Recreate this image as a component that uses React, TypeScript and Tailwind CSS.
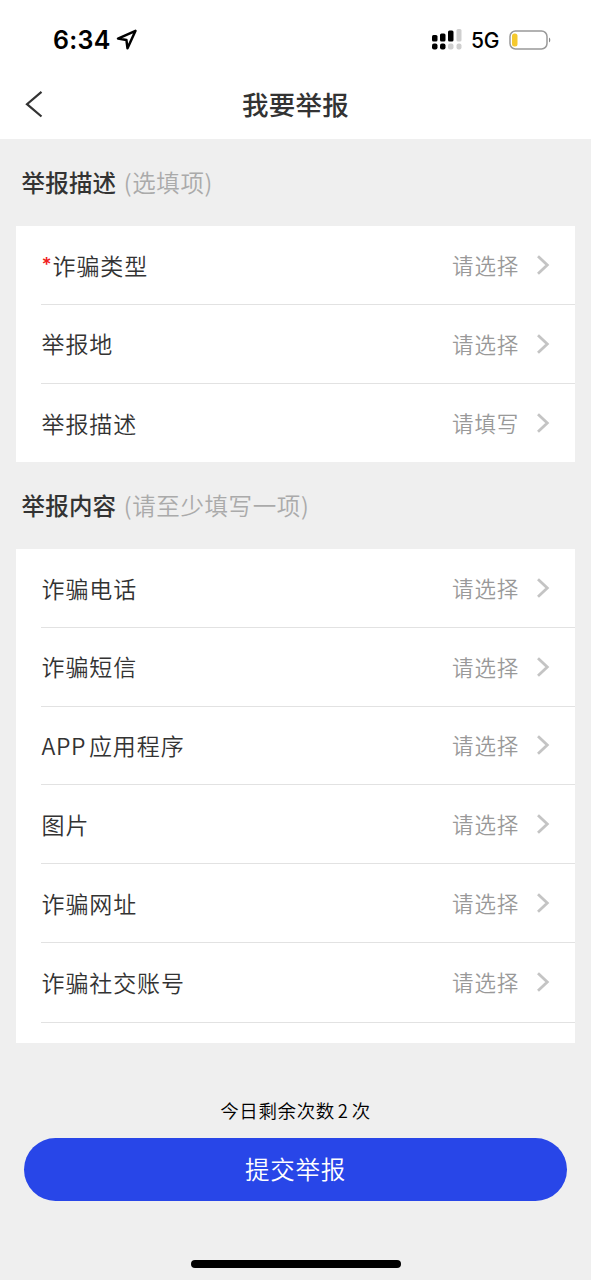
import type { ReactNode } from "react";

type Item = { id: string; label: ReactNode; value: string; required?: boolean };

const descItems: Item[] = [
  { id: "type", label: "诈骗类型", value: "请选择", required: true },
  { id: "place", label: "举报地", value: "请选择" },
  { id: "desc", label: "举报描述", value: "请填写" },
];

const contentItems: Item[] = [
  { id: "phone", label: "诈骗电话", value: "请选择" },
  { id: "sms", label: "诈骗短信", value: "请选择" },
  {
    id: "app",
    label: (
      <>
        <span className="mr-[3px] tracking-[0.6px]">APP</span>应用程序
      </>
    ),
    value: "请选择",
  },
  { id: "image", label: "图片", value: "请选择" },
  { id: "url", label: "诈骗网址", value: "请选择" },
  { id: "social", label: "诈骗社交账号", value: "请选择" },
];

function StatusBar() {
  return (
    <div className="flex h-[70px] items-start justify-between pl-[53px] pr-[39px] pt-[23px] font-['Inter','Liberation_Sans',sans-serif] text-black">
      <div className="flex h-[34px] items-center">
        <span className="w-[57px] whitespace-nowrap pt-px text-[25px] font-semibold tracking-[0.3px]">6:34</span>
        <svg className="ml-[6px]" width="22" height="22" viewBox="0 0 22 22" fill="none">
          <path
            d="M19.5 1.8 2 9.6 10.4 10.9 11.5 19.3Z"
            stroke="currentColor"
            strokeWidth="2.5"
            strokeLinejoin="round"
          />
        </svg>
      </div>
      <div className="flex h-[34px] items-center">
        <svg width="31" height="22" viewBox="0 0 31 22">
          <rect x="0" y="6" width="5.5" height="6.5" rx="1.5" />
          <rect x="8" y="4.5" width="5.5" height="8" rx="1.5" />
          <rect x="16" y="1.5" width="5.5" height="11" rx="1.5" />
          <rect x="24.5" y="0" width="5" height="12.5" rx="1.5" fill="#cfcfcf" />
          <rect x="0" y="14.5" width="5.5" height="6" rx="2" />
          <rect x="8" y="14.5" width="5.5" height="6" rx="2" />
          <rect x="16" y="14.5" width="5.5" height="6" rx="2" fill="#cfcfcf" />
          <rect x="24.5" y="14.5" width="5" height="6" rx="2" fill="#cfcfcf" />
        </svg>
        <span className="ml-[8px] w-[29px] pt-px text-[21px] font-medium tracking-[-0.3px]">5G</span>
        <svg className="ml-[9px]" width="43" height="20" viewBox="0 0 43 20">
          <rect x="1" y="1" width="37" height="18" rx="5.5" fill="none" stroke="#999" strokeWidth="1.5" />
          <rect x="3" y="3.5" width="5.5" height="13" rx="2.5" fill="#f5c92e" />
          <path d="M40 7.5a3 3 0 0 1 0 5Z" fill="#888" />
        </svg>
      </div>
    </div>
  );
}

function NavBar() {
  return (
    <header className="grid h-[69px] grid-cols-[60px_1fr_60px] items-center pb-[2px]">
      <svg className="ml-[24px]" width="20" height="28" viewBox="0 0 20 28" fill="none">
        <path d="M17.5 1.8 3 14.2 17.5 26.5" stroke="#333" strokeWidth="2.2" />
      </svg>
      <h1 className="text-center text-[26.5px] font-medium tracking-[0.3px]">我要举报</h1>
    </header>
  );
}

function SectionTitle({ title, hint }: { title: string; hint: string }) {
  return (
    <h2 className="flex h-[86.5px] items-center px-[21.5px] text-[23.5px] font-medium tracking-[0.2px]">
      {title}
      <span className="ml-[7.5px] font-[350] tracking-[0.6px] text-[#aaa]">({hint})</span>
    </h2>
  );
}

function Row({ label, value, required }: Omit<Item, "id">) {
  return (
    <li className="flex h-[78.75px] items-center border-b border-[#e2e2e2] pr-[25px] last:border-b-0">
      <span className="flex flex-1 pl-[0.5px] text-[23px] font-[350] tracking-[0.9px]">
        {required && (
          <span className="w-[11px] pt-[3px] font-['Inter',sans-serif] text-[19px] font-semibold tracking-normal text-[#f02020]">
            *
          </span>
        )}
        <span>{label}</span>
      </span>
      <span className="text-[21.5px] font-[350] tracking-[0.8px] text-[#999]">{value}</span>
      <svg className="ml-[17px]" width="14" height="20" viewBox="0 0 14 20" fill="none">
        <path d="M2 1.3 11.3 10 2 18.7" stroke="#c4c4c4" strokeWidth="2.8" />
      </svg>
    </li>
  );
}

export default function App() {
  return (
    <div className="flex h-[1280px] w-[591px] flex-col overflow-hidden bg-[#efefef] font-['Noto_Sans_CJK_SC',sans-serif] text-[#333]">
      <div className="bg-white">
        <StatusBar />
        <NavBar />
      </div>

      <SectionTitle title="举报描述" hint="选填项" />
      <ul className="mx-4 h-[236.5px] bg-white pl-[25px] pt-[0.6px]">
        {descItems.map(({ id, ...item }) => (
          <Row key={id} {...item} />
        ))}
      </ul>

      <SectionTitle title="举报内容" hint="请至少填写一项" />
      <div className="mx-4 h-[494.5px] overflow-hidden bg-white pl-[25px] pt-[0.6px]">
        <ul className="border-b border-[#e2e2e2]">
          {contentItems.map(({ id, ...item }) => (
            <Row key={id} {...item} />
          ))}
        </ul>
      </div>

      <footer className="flex flex-1 flex-col items-center pt-[52px]">
        <p className="h-[43px] text-[18.5px] font-[350] leading-[30px] tracking-[0.6px] text-black">
          今日剩余次数<span className="mx-[3px]">2</span>次
        </p>
        <button className="h-[63px] w-[543px] rounded-full bg-[#2846e8] text-[24.5px] font-[350] tracking-[0.7px] text-white">
          提交举报
        </button>
        <div className="mt-auto mb-[12px] h-[8px] w-[210px] rounded-full bg-black" />
      </footer>
    </div>
  );
}
